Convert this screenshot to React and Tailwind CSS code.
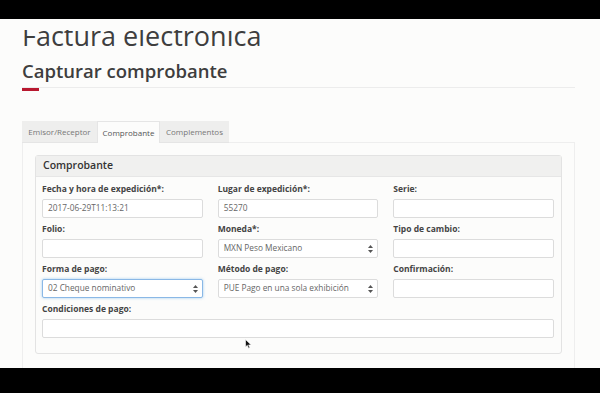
import React from "react";

const font = { fontFamily: "'Open Sans', 'Liberation Sans', sans-serif" };

function Arrows() {
  return (
    <svg width="5" height="8" viewBox="0 0 5 8" className="shrink-0">
      <path d="M2.5 0 L5 3 L0 3 Z" fill="#555" />
      <path d="M0 5 L5 5 L2.5 8 Z" fill="#555" />
    </svg>
  );
}

function Field({ label, value, select, focused, className = "" }) {
  return (
    <div className={"flex flex-col " + className}>
      <div className="h-[12px] leading-[12px] text-[8.5px] font-bold text-[#444] whitespace-nowrap">{label}</div>
      <div
        className={
          "mt-[4px] h-[19px] rounded-[2px] border bg-white flex items-center justify-between pl-[5px] pr-[4px] text-[8.3px] text-[#666] " +
          (focused
            ? "border-[#8ab8e6] shadow-[0_0_3px_rgba(102,175,233,0.6)]"
            : "border-[#dcdcdc]")
        }
      >
        <span className="whitespace-nowrap">{value}</span>
        {select && <Arrows />}
      </div>
    </div>
  );
}

export default function App() {
  return (
    <div className="w-[600px] h-[393px] flex flex-col bg-black overflow-hidden" style={font}>
      <div className="h-[19px] shrink-0 bg-black" />
      <div className="flex-1 bg-[#fcfcfb] overflow-hidden relative">
        <div className="h-[11px] bg-[#fcfcfb]" />
        <div className="overflow-hidden pl-[22px]">
          <h1 className="-mt-[10px] text-[27px] leading-[31px] text-[#3e3e3e] font-medium whitespace-nowrap">
            Factura electronica
          </h1>
        </div>
        <div className="mx-[22px] w-[553px]">
          <div className="pt-[8px] pb-[4px] border-b border-[#ececec]">
            <h2 className="text-[18.5px] leading-[24px] font-semibold text-[#3e3e3e] whitespace-nowrap">
              Capturar comprobante
            </h2>
          </div>
          <div className="h-[3px] w-[17px] bg-[#b8182f]" />

          <div className="mt-[30px] flex items-end h-[22px] text-[8px]">
            <div className="h-[22px] w-[75px] bg-[#eeeeed] text-[#777] flex items-center justify-center border-b border-[#e5e5e5]">
              Emisor/Receptor
            </div>
            <div className="h-[22px] w-[63px] bg-[#fcfcfb] text-[#555] flex items-center justify-center border border-b-0 border-[#e5e5e5]">
              Comprobante
            </div>
            <div className="h-[22px] w-[69px] bg-[#eeeeed] text-[#777] flex items-center justify-center border-b border-[#e5e5e5]">
              Complementos
            </div>
            <div className="flex-1 h-[22px] border-b border-[#eeeeee]" />
          </div>

          <div className="border-x border-[#eeeeee] h-[300px] pt-[12px] px-[12px]">
            <div className="border border-[#e3e3e3] rounded-[3px] bg-[#fcfcfb]">
              <div className="h-[21px] bg-[#f0f0ef] border-b border-[#e6e6e6] flex items-center pl-[7px] text-[10.5px] font-semibold text-[#333]">
                Comprobante
              </div>
              <div className="pt-[6px] pb-[15px] pl-[6px] pr-[7px]">
                <div className="grid grid-cols-3 gap-x-[15px] gap-y-[5px]">
                  <Field label="Fecha y hora de expedición*:" value="2017-06-29T11:13:21" />
                  <Field label="Lugar de expedición*:" value="55270" />
                  <Field label="Serie:" value="" />
                  <Field label="Folio:" value="" />
                  <Field label="Moneda*:" value="MXN Peso Mexicano" select />
                  <Field label="Tipo de cambio:" value="" />
                  <Field label="Forma de pago:" value="02 Cheque nominativo" select focused />
                  <Field label="Método de pago:" value="PUE Pago en una sola exhibición" select />
                  <Field label="Confirmación:" value="" />
                  <Field label="Condiciones de pago:" value="" className="col-span-3" />
                </div>
              </div>
            </div>
          </div>
        </div>
        <svg
          className="absolute left-[245px] top-[320px]"
          width="7"
          height="10"
          viewBox="0 0 7 10"
        >
          <path d="M0.5 0.5 L0.5 8 L2.3 6.3 L3.6 9.3 L4.8 8.8 L3.6 5.9 L6.2 5.9 Z" fill="#111" stroke="#fff" strokeWidth="0.6" />
        </svg>
      </div>
      <div className="h-[25px] shrink-0 bg-black" />
    </div>
  );
}
